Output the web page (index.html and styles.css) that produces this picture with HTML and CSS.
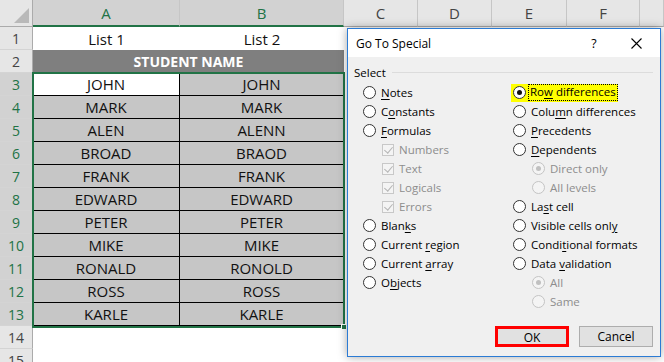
FILE: index.html
```html
<!DOCTYPE html>
<html lang="en">
<head>
    <meta charset="UTF-8">
    <title>Go To Special</title>
    <link rel="stylesheet" href="styles.css">
</head>
<body>
    <div class="sheet">
        <div class="col-heads">
            <div class="corner"><span class="corner-tri"></span></div>
            <div class="ch sel">A</div>
            <div class="ch sel">B</div>
            <div class="ch">C</div>
            <div class="ch">D</div>
            <div class="ch">E</div>
            <div class="ch">F</div>
            <div class="ch"></div>
        </div>

        <div class="row">
            <div class="rh">1</div>
            <div class="cell">List 1</div>
            <div class="cell">List 2</div>
            <div class="rest"></div>
        </div>
        <div class="row">
            <div class="rh">2</div>
            <div class="cell heading">STUDENT NAME</div>
            <div class="rest"></div>
        </div>
        <div class="row data">
            <div class="rh sel">3</div>
            <div class="cell active">JOHN</div>
            <div class="cell">JOHN</div>
            <div class="rest"></div>
        </div>
        <div class="row data">
            <div class="rh sel">4</div>
            <div class="cell">MARK</div>
            <div class="cell">MARK</div>
            <div class="rest"></div>
        </div>
        <div class="row data">
            <div class="rh sel">5</div>
            <div class="cell">ALEN</div>
            <div class="cell">ALENN</div>
            <div class="rest"></div>
        </div>
        <div class="row data">
            <div class="rh sel">6</div>
            <div class="cell">BROAD</div>
            <div class="cell">BRAOD</div>
            <div class="rest"></div>
        </div>
        <div class="row data">
            <div class="rh sel">7</div>
            <div class="cell">FRANK</div>
            <div class="cell">FRANK</div>
            <div class="rest"></div>
        </div>
        <div class="row data">
            <div class="rh sel">8</div>
            <div class="cell">EDWARD</div>
            <div class="cell">EDWARD</div>
            <div class="rest"></div>
        </div>
        <div class="row data">
            <div class="rh sel">9</div>
            <div class="cell">PETER</div>
            <div class="cell">PETER</div>
            <div class="rest"></div>
        </div>
        <div class="row data">
            <div class="rh sel">10</div>
            <div class="cell">MIKE</div>
            <div class="cell">MIKE</div>
            <div class="rest"></div>
        </div>
        <div class="row data">
            <div class="rh sel">11</div>
            <div class="cell">RONALD</div>
            <div class="cell">RONOLD</div>
            <div class="rest"></div>
        </div>
        <div class="row data">
            <div class="rh sel">12</div>
            <div class="cell">ROSS</div>
            <div class="cell">ROSS</div>
            <div class="rest"></div>
        </div>
        <div class="row data">
            <div class="rh sel">13</div>
            <div class="cell">KARLE</div>
            <div class="cell">KARLE</div>
            <div class="rest"></div>
        </div>
        <div class="row">
            <div class="rh">14</div>
            <div class="cell"></div>
            <div class="cell"></div>
            <div class="rest"></div>
        </div>
        <div class="row">
            <div class="rh">15</div>
            <div class="cell"></div>
            <div class="cell"></div>
            <div class="rest"></div>
        </div>

        <!-- selected range A3:B13 -->
        <div class="selection"><span class="fill-handle"></span></div>
    </div>

    <div class="dialog">
        <div class="dlg-title">
            <span class="dlg-caption">Go To Special</span>
            <span class="dlg-help">?</span>
            <span class="dlg-close">
                <svg width="11" height="11" viewBox="0 0 11 11"><path d="M0.5 0.5 L10.5 10.5 M10.5 0.5 L0.5 10.5" stroke="#000" stroke-width="1.1" fill="none"/></svg>
            </span>
        </div>
        <div class="dlg-body">
            <div class="group-label"><span>Select</span><span class="group-line"></span></div>
            <div class="options">
                <div class="opt-col">
                    <div class="opt"><span class="radio"></span><span class="lbl"><u>N</u>otes</span></div>
                    <div class="opt"><span class="radio"></span><span class="lbl">C<u>o</u>nstants</span></div>
                    <div class="opt"><span class="radio"></span><span class="lbl"><u>F</u>ormulas</span></div>
                    <div class="opt sub disabled"><span class="check"></span><span class="lbl">Numbers</span></div>
                    <div class="opt sub disabled"><span class="check"></span><span class="lbl">Text</span></div>
                    <div class="opt sub disabled"><span class="check"></span><span class="lbl">Logicals</span></div>
                    <div class="opt sub disabled"><span class="check"></span><span class="lbl">Errors</span></div>
                    <div class="opt"><span class="radio"></span><span class="lbl">Blan<u>k</u>s</span></div>
                    <div class="opt"><span class="radio"></span><span class="lbl">Current <u>r</u>egion</span></div>
                    <div class="opt"><span class="radio"></span><span class="lbl">Current <u>a</u>rray</span></div>
                    <div class="opt"><span class="radio"></span><span class="lbl">O<u>b</u>jects</span></div>
                </div>
                <div class="opt-col">
                    <div class="opt"><span class="marked"><span class="radio on"></span><span class="lbl focus">Ro<u>w</u> differences</span></span></div>
                    <div class="opt"><span class="radio"></span><span class="lbl">Colu<u>m</u>n differences</span></div>
                    <div class="opt"><span class="radio"></span><span class="lbl"><u>P</u>recedents</span></div>
                    <div class="opt"><span class="radio"></span><span class="lbl"><u>D</u>ependents</span></div>
                    <div class="opt sub disabled"><span class="radio on"></span><span class="lbl">Direct only</span></div>
                    <div class="opt sub disabled"><span class="radio"></span><span class="lbl">All levels</span></div>
                    <div class="opt"><span class="radio"></span><span class="lbl">La<u>s</u>t cell</span></div>
                    <div class="opt"><span class="radio"></span><span class="lbl">Visible cells onl<u>y</u></span></div>
                    <div class="opt"><span class="radio"></span><span class="lbl">Condi<u>t</u>ional formats</span></div>
                    <div class="opt"><span class="radio"></span><span class="lbl">Data <u>v</u>alidation</span></div>
                    <div class="opt sub disabled"><span class="radio on"></span><span class="lbl">All</span></div>
                    <div class="opt sub disabled"><span class="radio"></span><span class="lbl">Same</span></div>
                </div>
            </div>
            <div class="dlg-buttons">
                <button class="btn ok">OK</button>
                <button class="btn">Cancel</button>
            </div>
        </div>
    </div>
</body>
</html>
```

FILE: styles.css
```css
* {
    margin: 0;
    padding: 0;
    box-sizing: border-box;
}

body {
    width: 664px;
    height: 362px;
    overflow: hidden;
    background: #fff;
    font-family: 'Open Sans', 'Noto Sans', sans-serif;
    position: relative;
}

/* ---------- spreadsheet ---------- */

.sheet {
    position: relative;
}

.col-heads {
    display: grid;
    grid-template-columns: 33px 147px 164px 74px 74px 75px 73px 1fr;
    height: 27px;
}

.corner {
    background: #e6e6e6;
    border-right: 1px solid #ababab;
    border-bottom: 1px solid #ababab;
    position: relative;
}

.corner-tri {
    position: absolute;
    right: 3px;
    bottom: 3px;
    width: 0;
    height: 0;
    border-left: 15px solid transparent;
    border-bottom: 15px solid #b9b9b9;
}

.ch {
    background: #e6e6e6;
    border-right: 1px solid #c6c6c6;
    border-bottom: 1px solid #ababab;
    color: #444;
    font-size: 15px;
    display: flex;
    align-items: center;
    justify-content: center;
}

.ch.sel {
    background: #d2d2d2;
    color: #217346;
    border-bottom: 2px solid #217346;
}

.row {
    display: grid;
    grid-template-columns: 33px 147px 164px 1fr;
    height: 23px;
}

.rh {
    background: #e6e6e6;
    border-right: 1px solid #ababab;
    border-bottom: 1px solid #d4d4d4;
    color: #444;
    font-size: 14px;
    display: flex;
    align-items: center;
    justify-content: center;
}

.rh.sel {
    background: #d2d2d2;
    color: #217346;
}

.cell {
    font-size: 15px;
    color: #111;
    display: flex;
    align-items: center;
    justify-content: center;
}

.cell.heading {
    grid-column: span 2;
    background: #7f7f7f;
    color: #fff;
    font-weight: bold;
    font-size: 14px;
}

.row.data .cell {
    background: #c6c6c6;
    border-right: 1px solid #000;
    border-bottom: 1px solid #000;
}

.row.data .cell.active {
    background: #fff;
}

.selection {
    position: absolute;
    left: 32px;
    top: 72px;
    width: 313px;
    height: 256px;
    border: 2px solid #217346;
}

.fill-handle {
    position: absolute;
    right: -4px;
    bottom: -4px;
    width: 6px;
    height: 6px;
    background: #217346;
    border: 1px solid #fff;
}

/* ---------- dialog ---------- */

.dialog {
    position: absolute;
    left: 347px;
    top: 28px;
    width: 314px;
    height: 329px;
    background: #f0f0f0;
    border: 1px solid #2b7bd4;
    box-shadow: 0 0 9px rgba(0, 0, 0, 0.35);
    font-size: 11.5px;
    color: #000;
}

.dlg-title {
    height: 28px;
    background: #fff;
    display: flex;
    align-items: center;
    padding-left: 8px;
    font-size: 12px;
}

.dlg-caption {
    flex: 1;
}

.dlg-help {
    width: 14px;
    text-align: center;
    margin-right: 30px;
    font-size: 12.5px;
}

.dlg-close {
    width: 11px;
    height: 11px;
    margin-right: 18px;
    display: flex;
}

.dlg-body {
    padding: 7px 7px 9px 6px;
}

.group-label {
    display: flex;
    align-items: center;
    height: 16px;
}

.group-line {
    flex: 1;
    height: 1px;
    background: #dcdcdc;
    margin-left: 6px;
}

.options {
    display: grid;
    grid-template-columns: 150px 1fr;
    margin-top: 3px;
    padding-left: 9px;
    height: 228px;
}

.opt {
    height: 19px;
    display: flex;
    align-items: center;
}

.lbl {
    white-space: nowrap;
}

.opt u {
    text-decoration: underline;
    text-underline-offset: 2px;
}

.opt.sub {
    padding-left: 19px;
}

.opt.disabled {
    color: #8d8d8d;
}

.radio {
    width: 13px;
    height: 13px;
    border: 1px solid #333;
    border-radius: 50%;
    background: #fff;
    margin-right: 5px;
    flex-shrink: 0;
    position: relative;
}

.radio.on::after {
    content: '';
    position: absolute;
    left: 3px;
    top: 3px;
    width: 5px;
    height: 5px;
    border-radius: 50%;
    background: #111;
}

.disabled .radio {
    border-color: #c4c4c4;
    background: #f4f4f4;
}

.disabled .radio.on::after {
    background: #c0c0c0;
}

.check {
    width: 12px;
    height: 12px;
    border: 1px solid #c8c8c8;
    background: #f4f4f4;
    margin-right: 5px;
    flex-shrink: 0;
    position: relative;
}

.check::after {
    content: '';
    position: absolute;
    left: 3px;
    top: 0px;
    width: 4px;
    height: 7px;
    border-right: 1px solid #b4b4b4;
    border-bottom: 1px solid #b4b4b4;
    transform: rotate(40deg);
}

.marked {
    display: inline-flex;
    align-items: center;
    background: #ffff00;
    height: 18px;
    margin-left: -2px;
    padding: 0 1px 0 2px;
}

.marked .radio {
    margin-right: 3px;
}

.focus {
    outline: 1px dotted #000;
    padding: 0 1px 1px 1px;
    line-height: 14px;
}

.dlg-buttons {
    display: flex;
    justify-content: flex-end;
    gap: 10px;
    margin-top: 15px;
}

.btn {
    width: 74px;
    height: 21px;
    background: #e1e1e1;
    border: 1px solid #adadad;
    font-family: inherit;
    font-size: 12px;
    color: #000;
}

.btn.ok {
    border: 3px solid #ff0000;
}
```
